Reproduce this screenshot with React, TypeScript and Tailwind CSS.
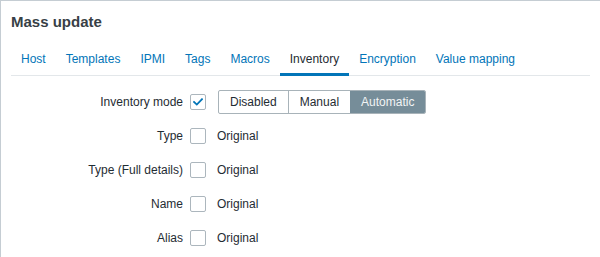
import React from "react";

const tabs = ["Host", "Templates", "IPMI", "Tags", "Macros", "Inventory", "Encryption", "Value mapping"];

function Check({ checked }: { checked?: boolean }) {
  return (
    <span className="flex h-4 w-4 shrink-0 items-center justify-center rounded-[2px] border border-[#acb6bd] bg-white">
      {checked && (
        <svg width="10" height="8" viewBox="0 0 10 8" fill="none">
          <path d="M1 4 L3.8 6.6 L9 1.2" stroke="#0275b8" strokeWidth="1.8" strokeLinecap="square" />
        </svg>
      )}
    </span>
  );
}

function Row({ label, children }: { label: string; children: React.ReactNode }) {
  return (
    <div className="flex h-6 items-center">
      <div className="w-[172px] shrink-0 text-right">{label}</div>
      <div className="ml-[7px] flex items-center">{children}</div>
    </div>
  );
}

export default function App() {
  return (
    <div
      className="h-[257px] w-[600px] overflow-hidden border-l border-t border-[#c5cdd3] bg-white text-[12px] text-[#1f2c33]"
      style={{ fontFamily: '"Liberation Sans", Arial, sans-serif' }}
    >
      <div className="pl-[10px] pr-[10px]">
        <div className="flex h-[42px] items-center pt-px text-[15px] font-bold text-[#383f46]">Mass update</div>
        <div className="flex h-[33px] border-b border-[#e3e7ea]">
          {tabs.map((t) => (
            <div
              key={t}
              className={`mb-[-1px] flex items-center px-[10px] pt-[2px] ${
                t === "Inventory" ? "border-b-[3px] border-[#0275b8] text-[#1f2c33]" : "border-b-[3px] border-transparent text-[#0275b8]"
              }`}
            >
              {t}
            </div>
          ))}
        </div>
        <div className="mt-[14px] flex flex-col gap-[10px]">
          <Row label="Inventory mode">
            <Check checked />
            <div className="ml-3 flex h-6 overflow-hidden rounded-[2px] border border-[#a8b3b9]">
              <div className="flex items-center border-r border-[#a8b3b9] px-[11px]">Disabled</div>
              <div className="flex items-center px-[11px]">Manual</div>
              <div className="flex items-center bg-[#768d99] px-[11px] text-[#f2f4f5]">Automatic</div>
            </div>
          </Row>
          <Row label="Type">
            <Check />
            <span className="ml-[11px]">Original</span>
          </Row>
          <Row label="Type (Full details)">
            <Check />
            <span className="ml-[11px]">Original</span>
          </Row>
          <Row label="Name">
            <Check />
            <span className="ml-[11px]">Original</span>
          </Row>
          <Row label="Alias">
            <Check />
            <span className="ml-[11px]">Original</span>
          </Row>
        </div>
      </div>
    </div>
  );
}
